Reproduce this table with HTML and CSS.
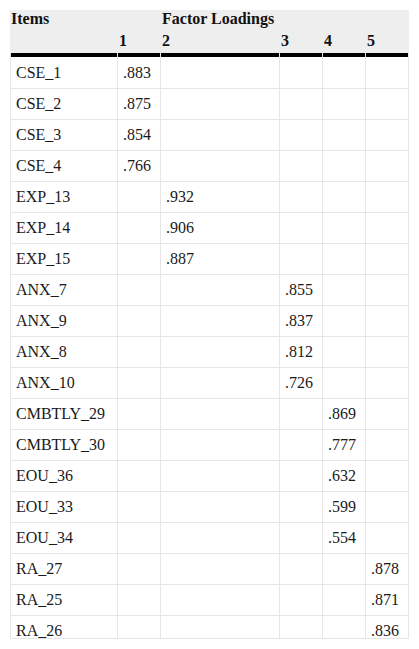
FILE: index.html
```html
<!DOCTYPE html>
<html>
<head>
<meta charset="utf-8">
<link rel="stylesheet" href="styles.css">
</head>
<body>
<div class="wrap">
<table class="loadings">
<colgroup>
<col class="c-item"><col class="c-n"><col class="c-wide"><col class="c-n"><col class="c-n"><col class="c-n">
</colgroup>
<thead>
<tr class="h1"><th rowspan="2" class="first">Items</th><th class="blank"></th><th colspan="4">Factor Loadings</th></tr>
<tr class="h2"><th>1</th><th>2</th><th>3</th><th>4</th><th>5</th></tr>
</thead>
<tbody>
<tr class="r-first"><td>CSE_1</td><td>.883</td><td></td><td></td><td></td><td></td></tr>
<tr><td>CSE_2</td><td>.875</td><td></td><td></td><td></td><td></td></tr>
<tr><td>CSE_3</td><td>.854</td><td></td><td></td><td></td><td></td></tr>
<tr><td>CSE_4</td><td>.766</td><td></td><td></td><td></td><td></td></tr>
<tr><td>EXP_13</td><td></td><td>.932</td><td></td><td></td><td></td></tr>
<tr><td>EXP_14</td><td></td><td>.906</td><td></td><td></td><td></td></tr>
<tr><td>EXP_15</td><td></td><td>.887</td><td></td><td></td><td></td></tr>
<tr><td>ANX_7</td><td></td><td></td><td>.855</td><td></td><td></td></tr>
<tr><td>ANX_9</td><td></td><td></td><td>.837</td><td></td><td></td></tr>
<tr><td>ANX_8</td><td></td><td></td><td>.812</td><td></td><td></td></tr>
<tr><td>ANX_10</td><td></td><td></td><td>.726</td><td></td><td></td></tr>
<tr><td>CMBTLY_29</td><td></td><td></td><td></td><td>.869</td><td></td></tr>
<tr><td>CMBTLY_30</td><td></td><td></td><td></td><td>.777</td><td></td></tr>
<tr><td>EOU_36</td><td></td><td></td><td></td><td>.632</td><td></td></tr>
<tr><td>EOU_33</td><td></td><td></td><td></td><td>.599</td><td></td></tr>
<tr><td>EOU_34</td><td></td><td></td><td></td><td>.554</td><td></td></tr>
<tr><td>RA_27</td><td></td><td></td><td></td><td></td><td>.878</td></tr>
<tr><td>RA_25</td><td></td><td></td><td></td><td></td><td>.871</td></tr>
<tr><td>RA_26</td><td></td><td></td><td></td><td></td><td>.836</td></tr>
</tbody>
</table>
</div>
</body>
</html>
```
FILE: styles.css
```css
html, body {
  margin: 0;
  padding: 0;
  background: #fff;
}
body {
  font-family: "Liberation Serif", "Times New Roman", serif;
  color: #111;
}
.wrap {
  margin: 10px 0 0 10px;
  width: 399px;
  height: 628px;
  overflow: hidden;
  border-bottom: 1px solid #e6e6e6;
}
.loadings {
  border-collapse: separate;
  border-spacing: 0;
  width: 399px;
  table-layout: fixed;
  font-size: 16px;
}
.c-item { width: 108px; }
.c-n { width: 43px; }
.c-wide { width: 119px; }
.loadings th {
  background-color: #eeeeee;
  text-align: left;
  font-weight: bold;
  padding: 0 0 0 1px;
  line-height: 18px;
  vertical-align: top;
  box-sizing: border-box;
}
.h1 th {
  height: 20px;
}
.h2 th {
  height: 23px;
  padding-top: 2px;
}
.loadings td {
  border-right: 1px solid #e6e6e6;
  border-bottom: 1px solid #e6e6e6;
  height: 31px;
  padding: 0 5px;
  line-height: 18px;
  vertical-align: middle;
  box-sizing: border-box;
  color: #1a1a1a;
}
.loadings td:first-child {
  border-left: 1px solid #e6e6e6;
}
.loadings .r-first td {
  box-shadow: inset 0 4px 0 #000000;
  height: 36px;
  padding-top: 5px;
}
```
